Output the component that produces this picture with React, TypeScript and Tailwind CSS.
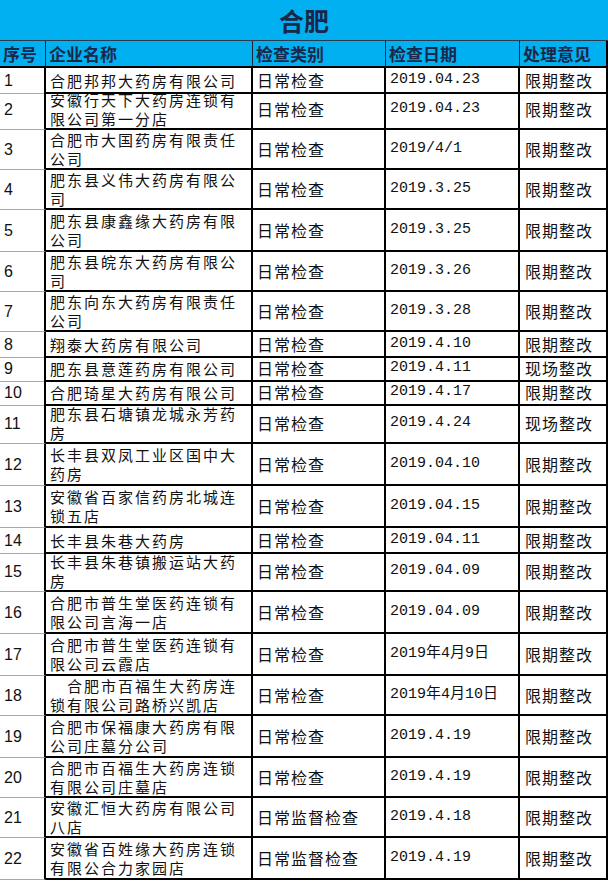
import React from 'react';

type Row = {
  no: number;
  name: string[];
  type: string;
  date: string;
  action: string;
  h: number;
};

const rows: Row[] = [
  { no: 1, name: ['合肥邦邦大药房有限公司'], type: '日常检查', date: '2019.04.23', action: '限期整改', h: 22 },
  { no: 2, name: ['安徽行天下大药房连锁有', '限公司第一分店'], type: '日常检查', date: '2019.04.23', action: '限期整改', h: 40 },
  { no: 3, name: ['合肥市大国药房有限责任', '公司'], type: '日常检查', date: '2019/4/1', action: '限期整改', h: 40 },
  { no: 4, name: ['肥东县义伟大药房有限公', '司'], type: '日常检查', date: '2019.3.25', action: '限期整改', h: 40 },
  { no: 5, name: ['肥东县康鑫缘大药房有限', '公司'], type: '日常检查', date: '2019.3.25', action: '限期整改', h: 42 },
  { no: 6, name: ['肥东县皖东大药房有限公', '司'], type: '日常检查', date: '2019.3.26', action: '限期整改', h: 40 },
  { no: 7, name: ['肥东向东大药房有限责任', '公司'], type: '日常检查', date: '2019.3.28', action: '限期整改', h: 40 },
  { no: 8, name: ['翔泰大药房有限公司'], type: '日常检查', date: '2019.4.10', action: '限期整改', h: 24 },
  { no: 9, name: ['肥东县意莲药房有限公司'], type: '日常检查', date: '2019.4.11', action: '现场整改', h: 24 },
  { no: 10, name: ['合肥琦星大药房有限公司'], type: '日常检查', date: '2019.4.17', action: '限期整改', h: 24 },
  { no: 11, name: ['肥东县石塘镇龙城永芳药', '房'], type: '日常检查', date: '2019.4.24', action: '现场整改', h: 40 },
  { no: 12, name: ['长丰县双凤工业区国中大', '药房'], type: '日常检查', date: '2019.04.10', action: '限期整改', h: 42 },
  { no: 13, name: ['安徽省百家信药房北城连', '锁五店'], type: '日常检查', date: '2019.04.15', action: '限期整改', h: 42 },
  { no: 14, name: ['长丰县朱巷大药房'], type: '日常检查', date: '2019.04.11', action: '限期整改', h: 24 },
  { no: 15, name: ['长丰县朱巷镇搬运站大药', '房'], type: '日常检查', date: '2019.04.09', action: '限期整改', h: 40 },
  { no: 16, name: ['合肥市普生堂医药连锁有', '限公司言海一店'], type: '日常检查', date: '2019.04.09', action: '限期整改', h: 42 },
  { no: 17, name: ['合肥市普生堂医药连锁有', '限公司云霞店'], type: '日常检查', date: '2019年4月9日', action: '限期整改', h: 42 },
  { no: 18, name: ['\u3000合肥市百福生大药房连', '锁有限公司路桥兴凯店'], type: '日常检查', date: '2019年4月10日', action: '限期整改', h: 40 },
  { no: 19, name: ['合肥市保福康大药房有限', '公司庄墓分公司'], type: '日常检查', date: '2019.4.19', action: '限期整改', h: 42 },
  { no: 20, name: ['合肥市百福生大药房连锁', '有限公司庄墓店'], type: '日常检查', date: '2019.4.19', action: '限期整改', h: 40 },
  { no: 21, name: ['安徽汇恒大药房有限公司', '八店'], type: '日常监督检查', date: '2019.4.18', action: '限期整改', h: 40 },
  { no: 22, name: ['安徽省百姓缘大药房连锁', '有限公合力家园店'], type: '日常监督检查', date: '2019.4.19', action: '限期整改', h: 42 },
];

const cols = 'grid grid-cols-[46px_207px_133px_134px_88px]';
const cjk = { fontFamily: '"Noto Sans CJK SC", sans-serif' };

export default function App() {
  return (
    <div
      className="w-[608px] h-[881px] bg-white text-[#111] overflow-hidden"
      style={cjk}
    >
      {/* title band */}
      <div className="h-[41px] bg-[#00b0f0] border-b border-[#2a3a4a] flex items-center justify-center">
        <span className="text-[25px] font-bold text-[#1a2748] leading-none">合肥</span>
      </div>

      {/* header */}
      <div className={`${cols} h-[27px] bg-[#00b0f0] text-[#1a2748] font-bold text-[17px] leading-none`}>
        {['序号', '企业名称', '检查类别', '检查日期', '处理意见'].map((t, i) => (
          <div
            key={t}
            className={`flex items-center px-[3px] border-b-2 border-black ${i < 4 ? 'border-r border-r-[#223]' : 'border-r-2 border-r-black'}`}
          >
            {t}
          </div>
        ))}
      </div>

      {rows.map((r) => (
        <div key={r.no} className={cols} style={{ height: r.h }}>
          <div className="flex items-center pl-[4px] border-b border-[#aaa] border-r-2 border-r-black text-[16px] font-['Liberation_Sans',sans-serif] font-light">
            {r.no}
          </div>
          <div className="flex flex-col justify-center overflow-hidden pl-[4px] border-b-2 border-r-2 border-black text-[15px] leading-[19px] tracking-[2px] whitespace-nowrap">
            {r.name.map((l) => (
              <span key={l} className="block h-[19px]">{l}</span>
            ))}
          </div>
          <div className="flex items-center pl-[4px] border-b-2 border-r-2 border-black text-[16px] tracking-[1px] whitespace-nowrap">
            {r.type}
          </div>
          <div
            className="flex items-center pl-[4px] border-b-2 border-r-2 border-black text-[15px] whitespace-nowrap"
            style={{ fontFamily: '"Liberation Mono", "Noto Sans CJK SC", monospace' }}
          >
            {r.date}
          </div>
          <div className="flex items-center pl-[5px] border-b-2 border-r-2 border-black text-[16px] tracking-[1px] whitespace-nowrap">
            {r.action}
          </div>
        </div>
      ))}
    </div>
  );
}
